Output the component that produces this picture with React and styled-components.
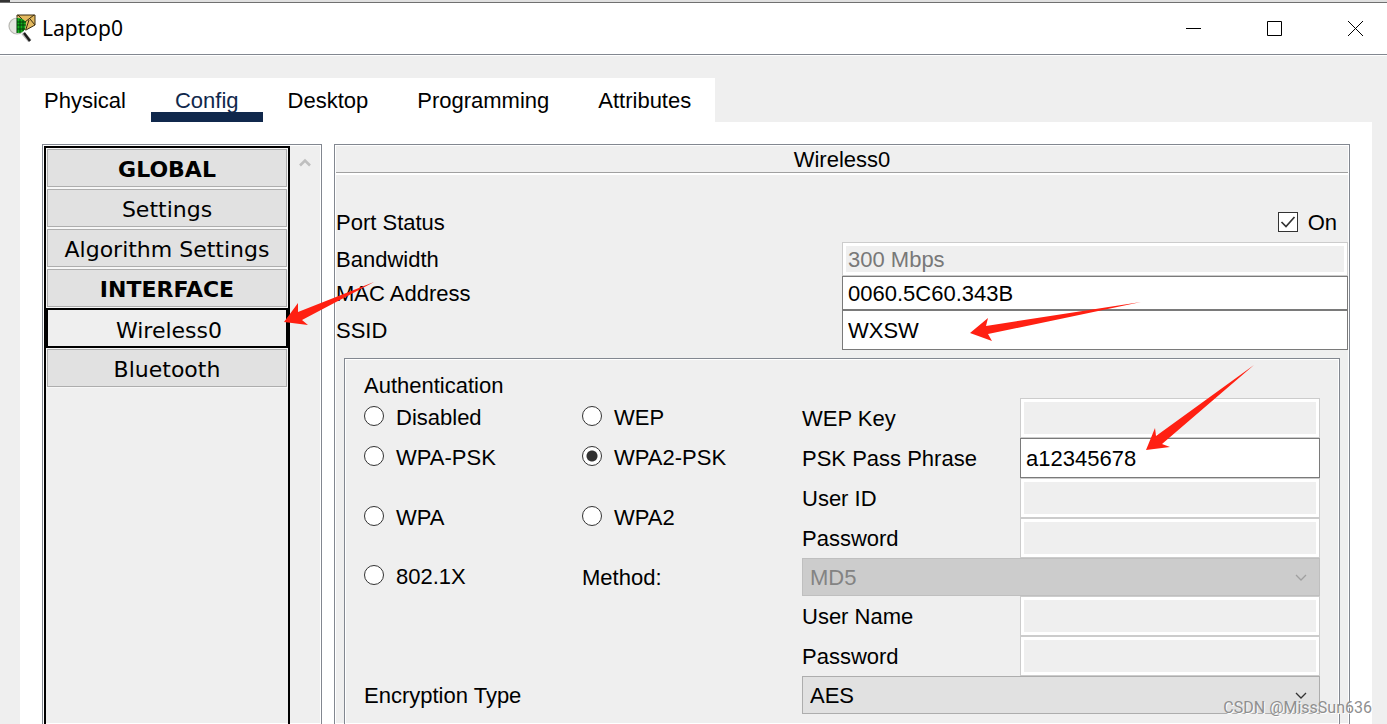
import React, { useState } from 'react';
import styled, { createGlobalStyle, css } from 'styled-components';

const sidebarItems = [
  { id: 'global', label: 'GLOBAL', heading: true },
  { id: 'settings', label: 'Settings' },
  { id: 'algorithm', label: 'Algorithm Settings' },
  { id: 'interface', label: 'INTERFACE', heading: true },
  { id: 'wireless0', label: 'Wireless0' },
  { id: 'bluetooth', label: 'Bluetooth' },
];

const tabs = ['Physical', 'Config', 'Desktop', 'Programming', 'Attributes'];

const authModes = [
  { label: 'Disabled', col: 1, row: '2' },
  { label: 'WEP', col: 2, row: '2' },
  { label: 'WPA-PSK', col: 1, row: '3' },
  { label: 'WPA2-PSK', col: 2, row: '3' },
  { label: 'WPA', col: 1, row: '4 / 6' },
  { label: 'WPA2', col: 2, row: '4 / 6' },
  { label: '802.1X', col: 1, row: '6' },
];

const credentials = [
  { id: 'wep-key', label: 'WEP Key', row: '2', disabled: true },
  { id: 'psk', label: 'PSK Pass Phrase', row: '3', value: 'a12345678' },
  { id: 'user-id', label: 'User ID', row: '4', disabled: true },
  { id: 'password', label: 'Password', row: '5', disabled: true },
  { id: 'user-name', label: 'User Name', row: '7', disabled: true },
  { id: 'user-password', label: 'Password', row: '8', disabled: true },
];

function AppIcon() {
  return (
    <svg width="28" height="28" viewBox="0 0 28 28" aria-hidden="true">
      <path d="M15 19l7 8" stroke="#b8b8b8" strokeWidth="4" />
      <path d="M16 19l6 8" stroke="#1c1c1c" strokeWidth="2.4" />
      <path d="M9 1h18v10l-9 5-9-3z" fill="#e3b95f" stroke="#3a2c10" strokeWidth="1" />
      <path d="M10 1l7 7 9-7M18 15l3-9M27 11l-5-6" fill="none" stroke="#3a2c10" strokeWidth="1" />
      <circle cx="9" cy="12" r="8" fill="#e6e6e1" stroke="#b9b9b4" strokeWidth="1.2" />
      <path d="M9 4c4 0 7 2 9 4l-1 7c-2 3-4 4-8 4z" fill="#12b01c" />
      <path d="M9 4v15M12 5v14M15 6v11M9 8h9M9 11h9M9 15h8" stroke="#033d08" strokeWidth="1" />
    </svg>
  );
}

function Chevron() {
  return (
    <svg width="12" height="7" viewBox="0 0 12 7" fill="none" aria-hidden="true">
      <path d="M1 1l5 5 5-5" stroke="currentColor" strokeWidth="1.3" />
    </svg>
  );
}

export default function App() {
  const [activeTab, setActiveTab] = useState('Config');
  const [activeItem, setActiveItem] = useState('wireless0');
  const [auth, setAuth] = useState('WPA2-PSK');

  return (
    <Window>
      <GlobalStyle />
      <TopEdge />
      <TitleBar>
        <AppIcon />
        <WindowTitle>Laptop0</WindowTitle>
        <WindowControls>
          <ControlButton aria-label="Minimize">
            <svg width="15" height="15" stroke="#000"><path d="M0 7.5h15" /></svg>
          </ControlButton>
          <ControlButton aria-label="Maximize">
            <svg width="15" height="15" stroke="#000" fill="none"><path d="M.5.5h14v14H.5z" /></svg>
          </ControlButton>
          <ControlButton aria-label="Close">
            <svg width="15" height="15" stroke="#000"><path d="M0 0l15 15M15 0L0 15" /></svg>
          </ControlButton>
        </WindowControls>
      </TitleBar>

      <Body>
        <TabBar>
          {tabs.map((tab) => (
            <Tab key={tab} $active={tab === activeTab} onClick={() => setActiveTab(tab)}>
              {tab}
            </Tab>
          ))}
        </TabBar>

        <Content>
          <Sidebar>
            <ItemList>
              {sidebarItems.map((item) => (
                <Item
                  key={item.id}
                  $heading={item.heading}
                  $selected={item.id === activeItem}
                  onClick={() => !item.heading && setActiveItem(item.id)}
                >
                  {item.label}
                  {item.id === 'wireless0' && (
                    <ItemArrow width="92" height="44" viewBox="0 0 92 44">
                      <path d="M1 40L15 21V30L91 0L19 38L25 43Z" />
                    </ItemArrow>
                  )}
                </Item>
              ))}
            </ItemList>
            <Scrollbar>
              <svg width="12" height="9" viewBox="0 0 12 9" fill="none">
                <path d="M1 7.5l5-5 5 5" stroke="#bfbfbf" strokeWidth="2.6" />
              </svg>
            </Scrollbar>
          </Sidebar>

          <Panel>
            <PanelTitle>Wireless0</PanelTitle>
            <Form>
              <FormRow>
                <FormText>Port Status</FormText>
                <CheckLabel>
                  <Checkbox type="checkbox" defaultChecked />
                  <svg width="20" height="20" viewBox="0 0 20 20" fill="none">
                    <path d="M3.5 10l4.5 4.5 8.5-9.5" stroke="#333" strokeWidth="1.7" />
                  </svg>
                  <FormText>On</FormText>
                </CheckLabel>
              </FormRow>
              <FormRow $short>
                <FormText as="label" htmlFor="bandwidth">Bandwidth</FormText>
                <TextInput id="bandwidth" defaultValue="300 Mbps" disabled />
              </FormRow>
              <FormRow $short>
                <FormText as="label" htmlFor="mac">MAC Address</FormText>
                <TextInput id="mac" defaultValue="0060.5C60.343B" />
              </FormRow>
              <FormRow>
                <FormText as="label" htmlFor="ssid">SSID</FormText>
                <FieldWrap>
                  <TextInput id="ssid" defaultValue="WXSW" />
                  <SsidArrow width="172" height="40" viewBox="0 0 172 40">
                    <path d="M0 31L18 16L16 24L171 0L18 32L22 39Z" />
                  </SsidArrow>
                </FieldWrap>
              </FormRow>
            </Form>

            <AuthGroup>
              <Cell $col="1 / 3" $row="1">Authentication</Cell>
              {authModes.map((mode) => (
                <RadioLabel key={mode.label} $col={mode.col} $row={mode.row}>
                  <Radio
                    type="radio"
                    name="auth"
                    checked={auth === mode.label}
                    onChange={() => setAuth(mode.label)}
                  />
                  {mode.label}
                </RadioLabel>
              ))}
              <Cell as="label" htmlFor="method" $col="2" $row="6">Method:</Cell>
              {credentials.map((field) => (
                <React.Fragment key={field.id}>
                  <Cell as="label" htmlFor={field.id} $col="3" $row={field.row}>{field.label}</Cell>
                  <FieldCell $col="4" $row={field.row}>
                    <TextInput id={field.id} defaultValue={field.value} disabled={field.disabled} />
                    {field.id === 'psk' && (
                      <PskArrow width="110" height="88" viewBox="0 0 110 88">
                        <path d="M0 86L9 64L10 72L108 1L16 80L24 83Z" />
                      </PskArrow>
                    )}
                  </FieldCell>
                </React.Fragment>
              ))}
              <SelectCell $col="3 / 5" $row="6" $disabled>
                <Select id="method" disabled defaultValue="MD5">
                  <option>MD5</option>
                </Select>
                <Chevron />
              </SelectCell>
              <Cell as="label" htmlFor="encryption" $col="1 / 3" $row="9">Encryption Type</Cell>
              <SelectCell $col="3 / 5" $row="9">
                <Select id="encryption" defaultValue="AES">
                  <option>AES</option>
                  <option>TKIP</option>
                </Select>
                <Chevron />
              </SelectCell>
            </AuthGroup>
          </Panel>
        </Content>
      </Body>
      <Watermark>CSDN @MissSun636</Watermark>
    </Window>
  );
}

const GlobalStyle = createGlobalStyle`
  * {
    box-sizing: border-box;
  }

  body {
    margin: 0;
    background: #efefef;
    color: #000;
    font: 22px/26px "Liberation Sans", Arial, sans-serif;
  }

  button, input, select {
    font: inherit;
    color: inherit;
    margin: 0;
    border-radius: 0;
  }
`;

const Window = styled.div`
  position: relative;
  display: flex;
  flex-direction: column;
  height: 100vh;
  overflow: hidden;
`;

const TopEdge = styled.div`
  flex: none;
  height: 3px;
  background: linear-gradient(to right, #333 10px, #e0e0e0 10px);
  border-bottom: 1px solid #707070;
`;

const TitleBar = styled.header`
  flex: none;
  display: flex;
  align-items: center;
  height: 53px;
  padding: 0 24px 2px 8px;
  background: #fff;
  border-bottom: 1px solid #fff;
  box-shadow: inset 0 -1px 0 #828790;
`;

const WindowTitle = styled.h1`
  flex: 1;
  margin: 0 0 0 6px;
  font: 21px/28px "Noto Sans", sans-serif;
`;

const WindowControls = styled.div`
  display: flex;
  gap: 66px;
`;

const ControlButton = styled.button`
  display: flex;
  padding: 0;
  border: 0;
  background: none;
`;

const Body = styled.div`
  flex: 1;
  min-height: 0;
  display: flex;
  flex-direction: column;
  padding: 22px 15px 0 20px;
`;

const TabBar = styled.nav`
  flex: none;
  display: flex;
  align-self: flex-start;
  gap: 1px;
  background: #fff;
`;

const Tab = styled.button`
  height: 44px;
  padding: 2px 24px 0;
  border: 0;
  background: ${({ $active }) =>
    $active ? 'linear-gradient(to top, #10284c 10px, transparent 10px)' : 'none'};
  color: ${({ $active }) => ($active ? '#10284c' : '#000')};
`;

const Content = styled.main`
  flex: 1;
  min-height: 0;
  display: flex;
  gap: 12px;
  padding: 22px 22px 0;
  background: #fff;
`;

const frame = css`
  border: 1px solid #828790;
  border-bottom: 0;
  background: #efefef;
  box-shadow: inset 0 0 0 1px #fff;
`;

const Sidebar = styled.aside`
  ${frame}
  flex: none;
  display: flex;
  width: 280px;
  padding: 1px 1px 0;
`;

const ItemList = styled.div`
  display: flex;
  flex-direction: column;
  width: 246px;
  border: 2px solid #000;
  border-bottom: 0;
`;

const Item = styled.button`
  position: relative;
  height: 38px;
  margin: 1px;
  padding: 3px 0 0;
  border: 1px solid #adadad;
  background: #e1e1e1;
  outline: 1px solid #f7f7f7;
  font-family: "DejaVu Sans", Verdana, sans-serif;
  font-weight: ${({ $heading }) => ($heading ? 700 : 400)};

  ${({ $selected }) => $selected && css`
    height: 40px;
    margin: 0;
    padding: 6px 0 0 4px;
    border: 2px solid #000;
    background: #efefef;
    outline: 0;
  `}
`;

const Scrollbar = styled.div`
  flex: 1;
  display: flex;
  justify-content: center;
  padding-top: 12px;
`;

const Arrow = styled.svg`
  position: absolute;
  z-index: 2;
  fill: #ff2012;
  pointer-events: none;
`;

const ItemArrow = styled(Arrow)`
  left: calc(100% - 3px);
  bottom: 20px;
`;

const SsidArrow = styled(Arrow)`
  left: 128px;
  top: -8px;
`;

const PskArrow = styled(Arrow)`
  left: 126px;
  bottom: 26px;
`;

const Panel = styled.section`
  ${frame}
  flex: 1;
  min-width: 0;
  display: flex;
  flex-direction: column;
  padding: 1px 1px 0;
`;

const PanelTitle = styled.h2`
  flex: none;
  margin: 0;
  padding-top: 2px;
  border-bottom: 1px solid #a0a0a0;
  box-shadow: 0 2px 0 #fff;
  font-size: 22px;
  font-weight: 400;
  line-height: 24px;
  text-align: center;
`;

const Form = styled.div`
  flex: none;
  padding-top: 29px;
`;

const FormRow = styled.div`
  display: grid;
  grid-template-columns: 1fr 1fr;
  align-items: center;
  height: ${({ $short }) => ($short ? '34px' : '40px')};
`;

const FormText = styled.span`
  padding-top: 2px;
`;

const CheckLabel = styled.label`
  position: relative;
  justify-self: end;
  display: flex;
  align-items: center;
  gap: 10px;
  padding-right: 11px;

  svg {
    position: absolute;
    left: 0;
  }
`;

const Checkbox = styled.input`
  appearance: none;
  width: 20px;
  height: 20px;
  border: 1px solid #333;
  background: #fff;
`;

const TextInput = styled.input`
  display: block;
  width: 100%;
  height: 100%;
  padding: 2px 5px 0;
  border: 1px solid #7a7a7a;
  background: #fff;

  &:disabled {
    border-color: #ccc;
    background: #efefef;
    box-shadow: inset 0 0 0 3px #fff;
    color: #787878;
  }
`;

const FieldWrap = styled.div`
  position: relative;
  height: 100%;
`;

const AuthGroup = styled.div`
  ${frame}
  flex: 1;
  display: grid;
  grid-template-columns: 218fr 220fr 218fr 300fr;
  grid-template-rows: 26px repeat(4, 40px) 38px repeat(2, 40px) 38px;
  margin: 8px 8px 0;
  padding: 13px 19px 0;
`;

const Cell = styled.div`
  display: flex;
  align-items: center;
  min-width: 0;
  padding-top: 1px;
  grid-column: ${({ $col }) => $col};
  grid-row: ${({ $row }) => $row};
`;

const RadioLabel = styled(Cell).attrs({ as: 'label' })`
  gap: 12px;
  padding: 0;
`;

const Radio = styled.input`
  appearance: none;
  width: 20px;
  height: 20px;
  border: 1px solid #333;
  border-radius: 50%;
  background: #fff;

  /* keeps the circle level with the capitals */
  && {
    margin-bottom: 4px;
  }

  &:checked {
    background: radial-gradient(circle, #333 5px, #fff 6px);
  }
`;

const FieldCell = styled(Cell)`
  position: relative;
  padding: 0;
`;

const SelectCell = styled(Cell)`
  position: relative;
  padding: 0;
  border: 1px solid ${({ $disabled }) => ($disabled ? '#bfbfbf' : '#adadad')};
  background: ${({ $disabled }) => ($disabled ? '#ccc' : '#e1e1e1')};
  color: ${({ $disabled }) => ($disabled ? '#a0a0a0' : '#333')};

  svg {
    position: absolute;
    right: 12px;
    pointer-events: none;
  }
`;

const Select = styled.select`
  appearance: none;
  width: 100%;
  height: 100%;
  padding: 2px 7px 0;
  border: 0;
  background: none;
  color: #000;

  &:disabled {
    color: #838383;
    opacity: 1;
  }
`;

const Watermark = styled.div`
  position: absolute;
  right: 15px;
  bottom: 6px;
  color: #8f8f8f;
  font: 16px/20px Roboto, sans-serif;
  text-shadow: 1px 1px 0 #fff;
  pointer-events: none;
`;
